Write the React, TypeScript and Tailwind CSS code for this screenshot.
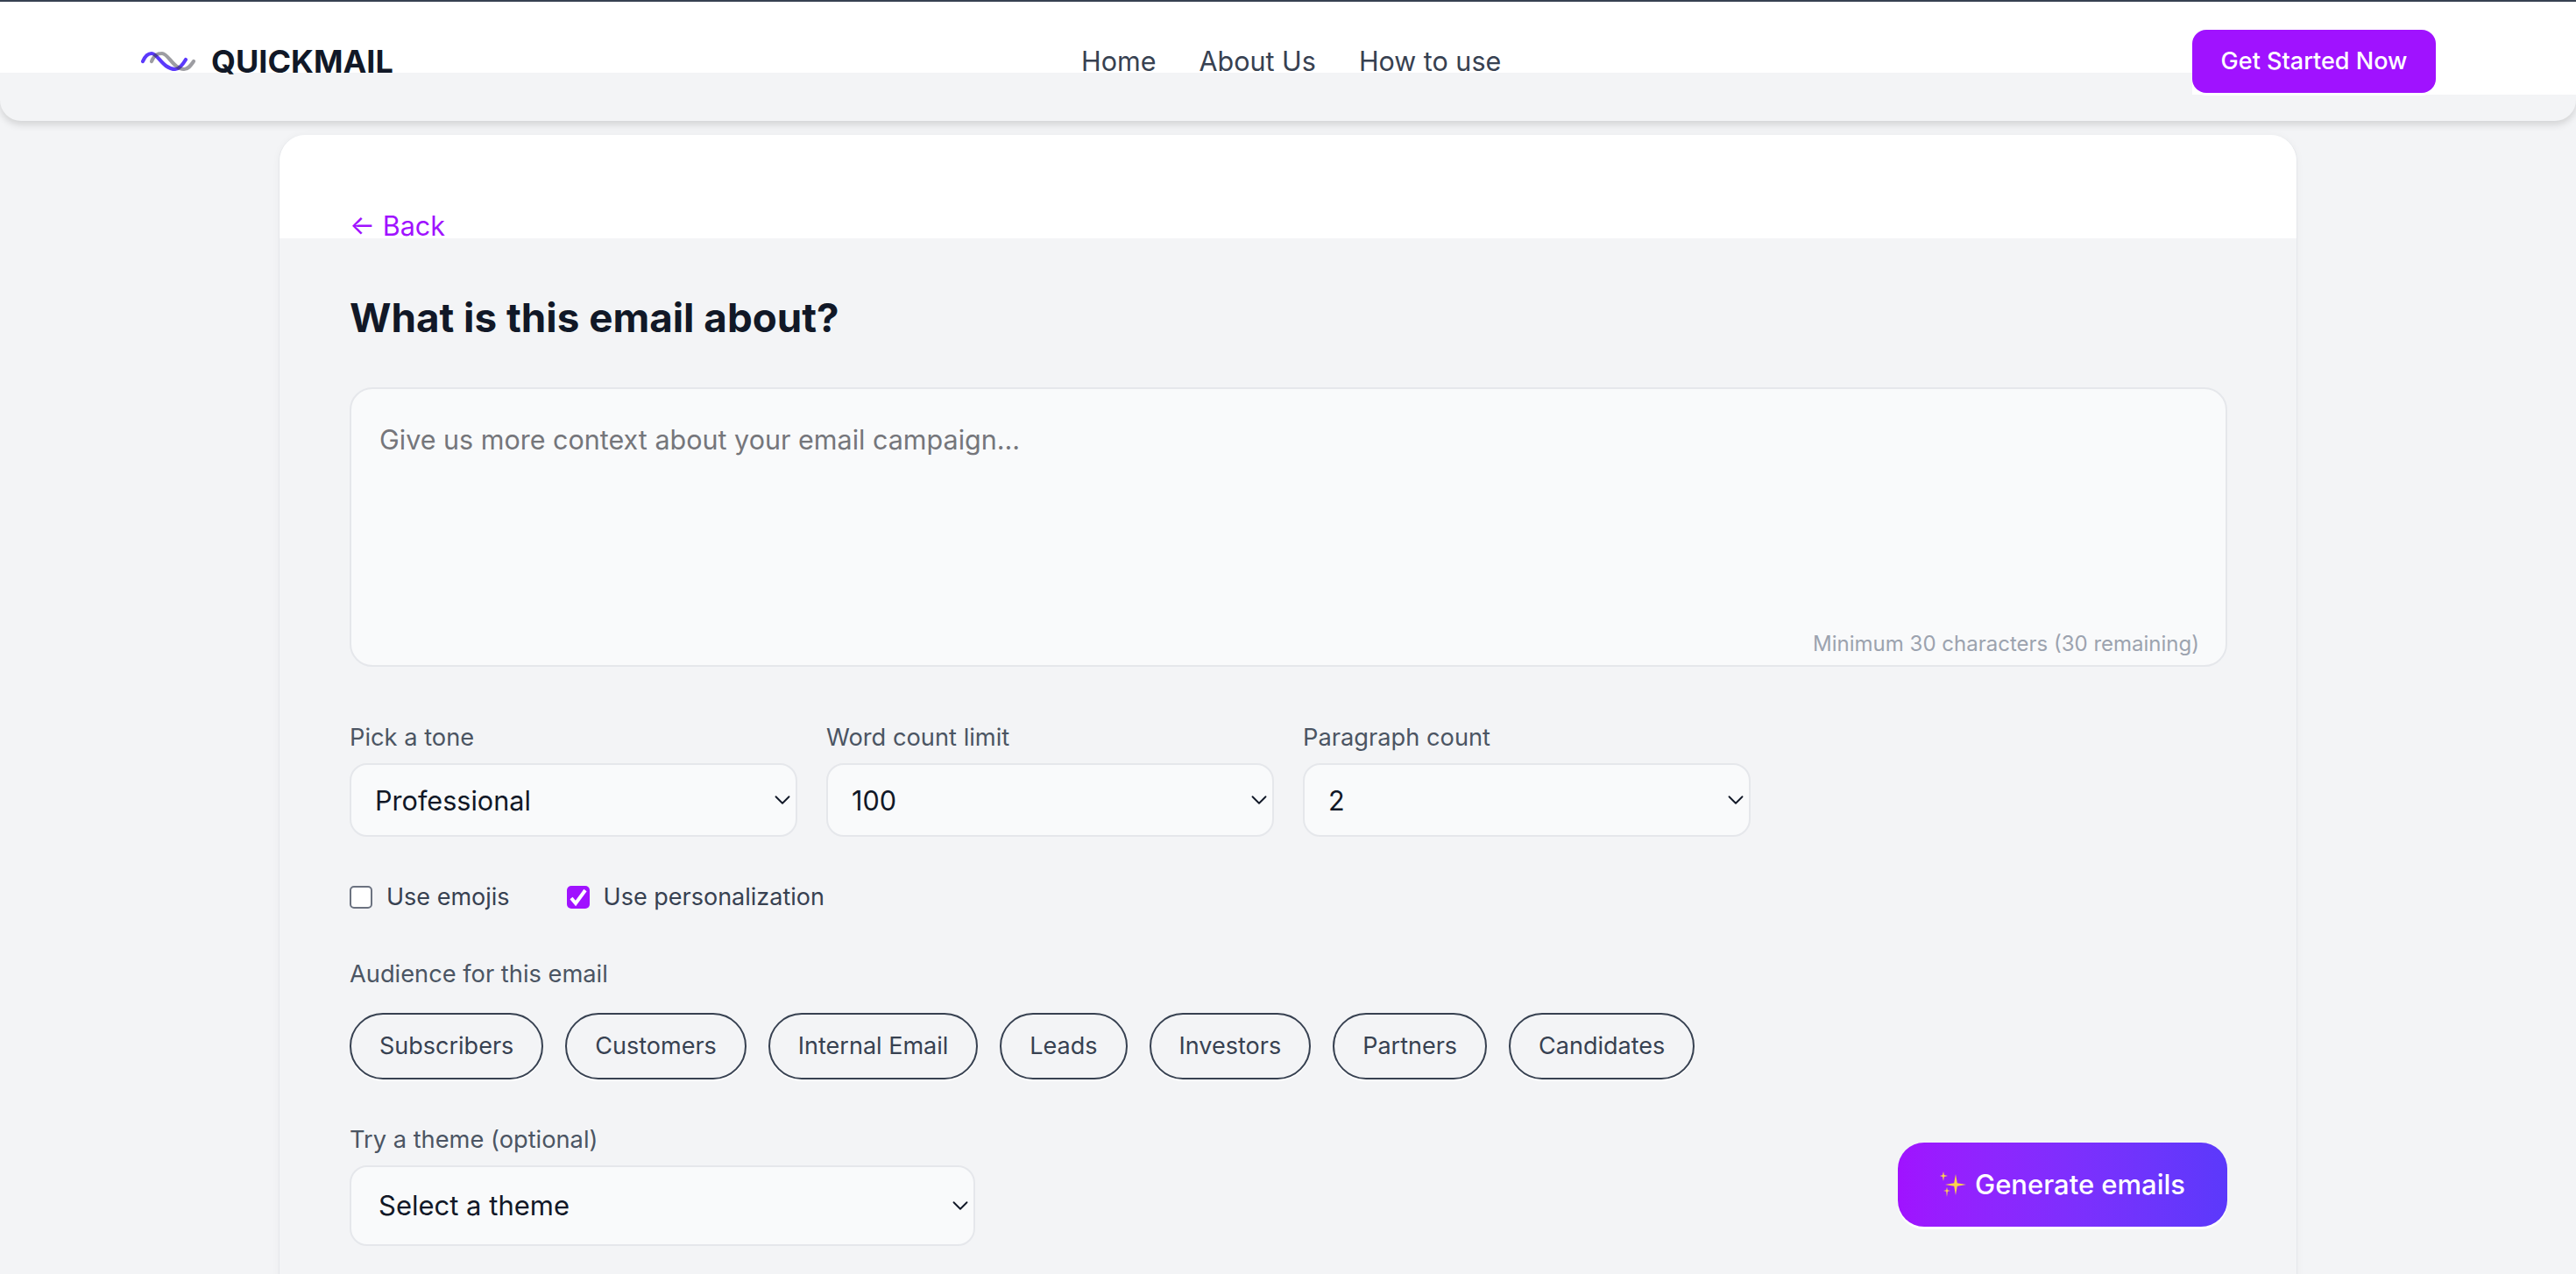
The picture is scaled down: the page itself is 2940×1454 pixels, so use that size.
import { ChevronDown } from 'lucide-react';

const inter = 'font-["Inter",sans-serif]';

const audiences = ['Subscribers', 'Customers', 'Internal Email', 'Leads', 'Investors', 'Partners', 'Candidates'];

function Logo() {
  return (
    <svg width="64" height="24" viewBox="0 0 64 24" fill="none" className="shrink-0" strokeWidth="4.2" strokeLinecap="round">
      <path d="M3 12 C6 5 9 3 13 3 C20 3 26 21 40 21 C45 21 49 15 52 10" stroke="#5b39fb" />
      <path d="M13 12 C16 5 19 3 25 3 C32 3 38 21 50 21 C55 21 58 16 61 12" stroke="rgba(60,60,70,0.5)" />
    </svg>
  );
}

function Sparkles() {
  return (
    <svg width="30" height="30" viewBox="0 0 30 30" fill="#fcd34d" className="shrink-0">
      <path d="M18 3 L19.8 13.2 L30 15 L19.8 16.8 L18 27 L16.2 16.8 L6 15 L16.2 13.2 Z" />
      <path d="M4 0 L4.9 4.1 L9 5 L4.9 5.9 L4 11 L3.1 5.9 L0 5 L3.1 4.1 Z" />
      <path d="M8 18 L8.8 21.2 L12 22 L8.8 22.8 L8 29 L7.2 22.8 L4 22 L7.2 21.2 Z" />
    </svg>
  );
}

function SelectField({ label, value, className }: { label?: string; value: string; className: string }) {
  return (
    <div className={className}>
      {label && <p className="text-[27.25px] leading-[38px] text-[#4b5563]">{label}</p>}
      <div className="mt-[10px] flex h-[84px] items-center justify-between rounded-[20px] border-2 border-[#e5e7eb] bg-[#f9fafb] pl-[27px] text-[30.6px] text-[#111827]">
        <span className="pt-[2px]">{value}</span>
        <ChevronDown className="h-[30px] w-[30px] text-[#111827]" strokeWidth={1.5} />
      </div>
    </div>
  );
}

export default function App() {
  return (
    <div className={`${inter} h-[1454px] overflow-hidden bg-[#f3f4f6]`}>
      <header className="h-[138px] rounded-b-[24px] border-t-2 border-[#374151] bg-[#f3f4f6] shadow-[0_4px_8px_rgba(0,0,0,0.14)]">
        <div className="flex items-start">
          <div className="flex h-[81px] flex-1 bg-white pl-[160px] pt-[32px]">
            <div className="flex h-[72px] w-[1074px] items-center gap-[17px]">
              <Logo />
              <span className="text-[36px] font-bold text-[#111827]">QUICKMAIL</span>
            </div>
            <nav className="flex h-[72px] items-center gap-[49px] text-[30.5px] text-[#374151]">
              <a>Home</a>
              <a>About Us</a>
              <a>How to use</a>
            </nav>
          </div>
          <div className="h-[106px] w-[438px] bg-white pt-[32px]">
            <button className="flex h-[72px] w-[278px] items-center justify-center rounded-[16px] bg-[#a012ff] text-[27px] font-medium text-white shadow-[0_3px_0_#ffffff]">
              Get Started Now
            </button>
          </div>
        </div>
      </header>

      <main className="mx-auto mt-[16px] h-[1400px] w-[2304px] overflow-hidden rounded-t-[30px] border-x border-[#e5e7eb] bg-[#f3f4f6] shadow-[0_0_8px_rgba(0,0,0,0.04)]">
        <div className="h-[118px] bg-white pl-[80px] pt-[86px]">
          <a className="block h-[36px] text-[30.5px] leading-[36px] text-[#a012ff]">← Back</a>
        </div>

        <div className="pl-[80px] pr-[79px]">
          <h1 className="mt-[61px] text-[45.75px] font-bold leading-[60px] text-[#111827]">What is this email about?</h1>

          <div className="relative mt-[49px] h-[319px] rounded-[26px] border-2 border-[#e5e7eb] bg-[#f9fafb] px-[32px] pt-[38px]">
            <p className="text-[30.5px] leading-[40px] text-[#75767b]">Give us more context about your email campaign...</p>
            <span className="absolute bottom-[6px] right-[30px] text-[24px] text-[#9ca3af]">Minimum 30 characters (30 remaining)</span>
          </div>

          <div className="mt-[62px] flex gap-[33px]">
            <SelectField className="w-[511px]" label="Pick a tone" value="Professional" />
            <SelectField className="w-[511px]" label="Word count limit" value="100" />
            <SelectField className="w-[511px]" label="Paragraph count" value="2" />
          </div>

          <div className="mt-[54px] flex h-[30px] items-center text-[27px] text-[#374151]">
            <label className="flex items-center gap-[16px]">
              <span className="h-[26px] w-[26px] rounded-[5px] border-2 border-[#6b7280] bg-white" />
              Use emojis
            </label>
            <label className="ml-[65px] flex items-center gap-[16px]">
              <span className="h-[26px] w-[26px] rounded-[5px] bg-[#a012ff]">
                <svg width="26" height="26" viewBox="0 0 26 26" fill="none" stroke="#ffffff" strokeWidth="4">
                  <polyline points="5,14 10,20 21,5" />
                </svg>
              </span>
              Use personalization
            </label>
          </div>

          <p className="mt-[54px] text-[27.25px] leading-[38px] text-[#4b5563]">Audience for this email</p>

          <div className="mt-[25px] flex gap-[25px]">
            {audiences.map((a) => (
              <button key={a} className="h-[76px] rounded-full border-2 border-[#374151] px-[32px] text-[27px] text-[#374151] shadow-[0_2px_0_#ffffff]">
                {a}
              </button>
            ))}
          </div>

          <div className="mt-[50px] flex items-end justify-between">
            <div className="w-[714px]">
              <p className="text-[27.25px] leading-[38px] text-[#4b5563]">Try a theme (optional)</p>
              <div className="mt-[10px] flex h-[92px] items-center justify-between rounded-[20px] border-2 border-[#e5e7eb] bg-[#f9fafb] pl-[31px] text-[31px] text-[#111827]">
                <span>Select a theme</span>
                <ChevronDown className="h-[30px] w-[30px]" strokeWidth={1.5} />
              </div>
            </div>
            <button className="mb-[22px] flex h-[96px] w-[376px] items-center justify-center gap-[10px] rounded-[30px] bg-gradient-to-r from-[#a012ff] to-[#5b39fb] text-[31px] font-medium text-white shadow-[0_3px_0_#ffffff]">
              <Sparkles />
              Generate emails
            </button>
          </div>
        </div>
      </main>
    </div>
  );
}
